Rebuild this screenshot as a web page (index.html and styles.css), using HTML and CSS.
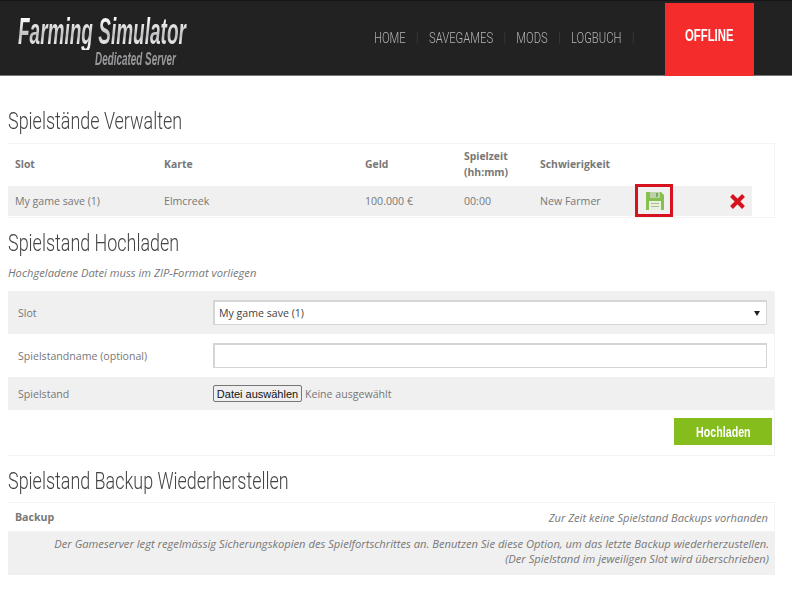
FILE: index.html
```html
<!DOCTYPE html>
<html lang="de">

<head>
  <meta charset="UTF-8">
  <meta name="viewport" content="width=device-width, initial-scale=1.0">
  <title>Farming Simulator Dedicated Server</title>
  <link rel="stylesheet" href="styles.css">
</head>

<body>
  <div class="header">
    <a class="logo" href="#">
      <span class="logo-main">Farming Simulator</span>
      <span class="logo-sub">Dedicated Server</span>
    </a>
    <div class="nav">
      <ul>
        <li><a href="#">HOME</a></li>
        <li><a href="#">SAVEGAMES</a></li>
        <li><a href="#">MODS</a></li>
        <li><a href="#">LOGBUCH</a></li>
      </ul>
    </div>
    <div class="status"><span>OFFLINE</span></div>
  </div>

  <div class="content">
    <h2 class="title-first">Spielstände Verwalten</h2>
    <div class="table-box">
      <table class="saves">
        <tr class="head">
          <th class="col-slot">Slot</th>
          <th class="col-map">Karte</th>
          <th class="col-money">Geld</th>
          <th class="col-time">Spielzeit<br>(hh:mm)</th>
          <th class="col-level">Schwierigkeit</th>
          <th class="col-save"></th>
          <th class="col-del"></th>
        </tr>
        <tr class="grey">
          <td>My game save (1)</td>
          <td>Elmcreek</td>
          <td>100.000 €</td>
          <td>00:00</td>
          <td>New Farmer</td>
          <td class="icon-cell">
            <div class="marker">
              <svg width="18" height="18" viewBox="0 0 18 18">
                <path d="M0 0h15l3 3v15H0z" fill="#86c04f" />
                <rect x="4" y="0" width="10" height="6" fill="#bcd2a8" />
                <rect x="10" y="1" width="2" height="4" fill="#7fa860" />
                <rect x="3" y="9" width="12" height="9" fill="#e9f0e0" />
                <rect x="5" y="11" width="8" height="1" fill="#a9c191" />
                <rect x="5" y="14" width="8" height="1" fill="#a9c191" />
              </svg>
            </div>
          </td>
          <td class="icon-cell">
            <svg class="del" width="17" height="17" viewBox="0 0 17 17">
              <path d="M2.5 2.5l12 12M14.5 2.5l-12 12" stroke="#d6121f" stroke-width="4" />
            </svg>
          </td>
        </tr>
      </table>
    </div>

    <h2 class="title-upload">Spielstand Hochladen</h2>
    <p class="note">Hochgeladene Datei muss im ZIP-Format vorliegen</p>

    <form class="upload">
      <div class="row row-slot grey">
        <label>Slot</label>
        <div class="select-wrap">
          <select>
            <option>My game save (1)</option>
          </select>
        </div>
      </div>
      <div class="row row-name">
        <label>Spielstandname (optional)</label>
        <input type="text">
      </div>
      <div class="row row-file grey">
        <label>Spielstand</label>
        <div class="file">
          <button type="button" class="file-btn">Datei auswählen</button>
          <span>Keine ausgewählt</span>
        </div>
      </div>
      <div class="actions">
        <button type="button" class="submit"><span>Hochladen</span></button>
      </div>
    </form>

    <h2 class="title-backup">Spielstand Backup Wiederherstellen</h2>
    <div class="backup">
      <div class="backup-head">
        <strong>Backup</strong>
        <em>Zur Zeit keine Spielstand Backups vorhanden</em>
      </div>
      <div class="backup-info grey">
        Der Gameserver legt regelmässig Sicherungskopien des Spielfortschrittes an. Benutzen Sie diese Option, um das letzte Backup wiederherzustellen.<br>
        (Der Spielstand im jeweiligen Slot wird überschrieben)
      </div>
    </div>
  </div>
</body>

</html>
```

FILE: styles.css
```css
* {
  margin: 0;
  padding: 0;
  box-sizing: border-box;
}

body {
  background-color: #fff;
  color: #777;
  font-family: "Open Sans", sans-serif;
  font-size: 10.6px;
}

ul {
  list-style: none;
}

a {
  text-decoration: none;
}

.grey {
  background-color: #f0f0f0;
}

/* header */
.header {
  display: flex;
  height: 76px;
  padding-top: 2px;
  background-color: #222;
  border-top: 1px solid #161616;
  border-bottom: 1px solid #777;
}

.logo {
  display: flex;
  flex-direction: column;
  width: 347px;
  padding: 11px 0 0 18px;
  font-family: "Liberation Sans", sans-serif;
  font-style: italic;
  font-weight: bold;
}

.logo-main {
  width: 320px;
  background: linear-gradient(#fff 10%, #bdbdc0 60%, #f0f0f0 85%);
  background-clip: text;
  -webkit-background-clip: text;
  color: transparent;
  font-size: 36px;
  line-height: 36px;
  white-space: nowrap;
  transform: scaleX(0.528);
  transform-origin: left;
}

.logo-sub {
  margin: 1px 0 0 77px;
  color: #99999c;
  font-size: 18px;
  line-height: 16px;
  white-space: nowrap;
  transform: scaleX(0.55);
  transform-origin: left;
}

.nav {
  width: 318px;
  padding-left: 27px;
}

.nav ul {
  display: flex;
  align-items: center;
  height: 70px;
  font-family: Roboto, sans-serif;
  font-size: 15px;
  font-weight: 300;
  transform: scaleX(0.75);
  transform-origin: left;
}

.nav li {
  flex: none;
  height: 12px;
  padding-right: 15px;
  margin-right: 15px;
  border-right: 1px solid #3c3c3c;
  line-height: 12px;
}

.nav a {
  color: #b5b5b5;
}

.status {
  width: 89px;
  margin-bottom: -1px;
  padding-top: 24px;
  background-color: #f42c2c;
  color: #fff;
  font-family: "Liberation Sans", sans-serif;
  font-size: 16px;
  font-weight: bold;
  text-align: center;
}

.status span {
  display: inline-block;
  transform: scaleX(0.71);
}

/* main */
.content {
  width: 767px;
  margin-left: 8px;
}

h2 {
  color: #444;
  font-family: Roboto, sans-serif;
  font-size: 23px;
  font-weight: 300;
  line-height: 28px;
  white-space: nowrap;
  transform: scaleX(0.78);
  transform-origin: left;
}

.title-first {
  margin-top: 32px;
  margin-bottom: 7px;
}

.title-upload {
  margin-top: 12px;
}

.title-backup {
  margin-top: 12px;
  margin-bottom: 6px;
}

.note {
  margin-top: 7px;
  margin-bottom: 11px;
  font-size: 11.2px;
  font-style: italic;
  line-height: 15px;
}

.table-box {
  height: 75px;
  border: 1px solid #f3f3f3;
  border-left: 0;
}

.saves {
  width: 744px;
  border-collapse: collapse;
  table-layout: fixed;
}

.saves th,
.saves td {
  padding-left: 7px;
  text-align: left;
}

.saves th {
  height: 42px;
  padding-bottom: 2px;
  font-size: 10.4px;
  line-height: 16px;
}

.saves td {
  height: 30px;
}

.col-slot {
  width: 149px;
}

.col-map {
  width: 201px;
}

.col-money {
  width: 99px;
}

.col-time {
  width: 76px;
}

.col-level {
  width: 92px;
}

.col-save {
  width: 65px;
}

.saves .icon-cell {
  padding: 0;
}

.marker {
  display: flex;
  align-items: center;
  justify-content: center;
  width: 38px;
  height: 33px;
  margin: -2px 0 -1px 10px;
  padding-left: 2px;
  border: 3px solid #d6121f;
}

.del {
  display: block;
  margin-left: 39px;
}

/* upload form */
.upload {
  border: 1px solid #f3f3f3;
  border-top: 0;
  border-left: 0;
}

.row {
  display: grid;
  grid-template-columns: 195px 554px;
  align-items: center;
  padding-left: 10px;
}

.row label {
  padding-top: 2px;
  line-height: 15px;
}

.row-slot,
.row-name {
  height: 43px;
}

.row-file {
  height: 33px;
}

.row select,
.row input {
  display: block;
  height: 25px;
  width: 100%;
  background-color: #fff;
  border: 1px solid #d5d5d5;
  border-top-width: 2px;
  border-left-width: 2px;
  border-radius: 0;
  color: #444;
  font-family: "Open Sans", sans-serif;
  font-size: 10.6px;
}

.select-wrap {
  position: relative;
}

.row select {
  appearance: none;
  padding-left: 4px;
}

.select-wrap::after {
  content: "";
  position: absolute;
  top: 11px;
  right: 7px;
  border-top: 5px solid #222;
  border-left: 3px solid transparent;
  border-right: 3px solid transparent;
}

.file {
  display: flex;
  align-items: center;
  gap: 3px;
}

.file-btn {
  width: 89px;
  height: 17px;
  background-color: #efefef;
  border: 1px solid #767676;
  border-radius: 2px;
  color: #111;
  font-family: "Liberation Sans", sans-serif;
  font-size: 11px;
}

.actions {
  display: flex;
  justify-content: flex-end;
  height: 45px;
  padding: 8px 2px 0 0;
}

.submit {
  width: 98px;
  height: 27px;
  background-color: #84bd1c;
  border: 0;
  color: #fff;
  font-family: "Liberation Sans", sans-serif;
  font-size: 15px;
  font-weight: bold;
}

.submit span {
  display: inline-block;
  transform: scaleX(0.71);
}

/* backup */
.backup-head {
  display: flex;
  align-items: center;
  justify-content: space-between;
  height: 30px;
  padding: 0 6px 0 7px;
  border: 1px solid #f3f3f3;
  border-left: 0;
}

.backup-head em {
  font-size: 11.1px;
}

.backup-info {
  height: 43px;
  padding: 4px 6px 0 0;
  font-size: 11.2px;
  font-style: italic;
  line-height: 15px;
  text-align: right;
}
```
